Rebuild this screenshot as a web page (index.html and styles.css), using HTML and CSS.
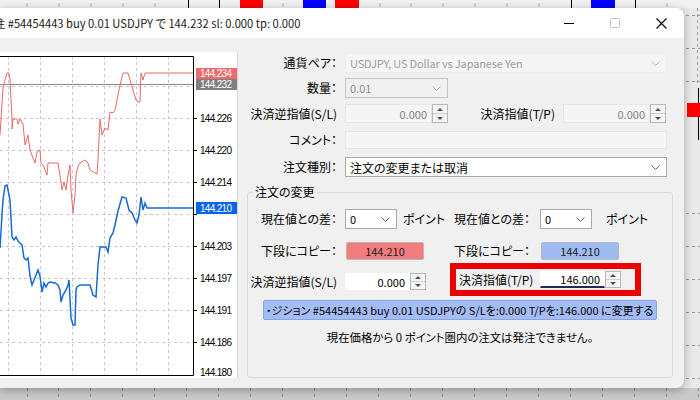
FILE: index.html
```html
<!DOCTYPE html>
<html lang="ja">
<head>
    <meta charset="UTF-8">
    <meta name="viewport" content="width=device-width, initial-scale=1.0">
    <title>注文の変更</title>
    <link rel="stylesheet" href="styles.css">
</head>
<body>
<div class="desktop">
    <!-- chart behind the dialog -->
    <svg class="backdrop" width="700" height="400" viewBox="0 0 700 400">
        <rect width="700" height="400" fill="#e9e9e9"/>
        <rect width="700" height="8" fill="#f2f2f2"/>
        <rect y="388" width="700" height="12" fill="#c9c9c9"/>
        <g stroke="#b4b4b4">
            <line x1="27" y1="3" x2="27" y2="7"/><line x1="59" y1="3" x2="59" y2="7"/>
            <line x1="91" y1="3" x2="91" y2="7"/><line x1="123" y1="3" x2="123" y2="7"/>
            <line x1="155" y1="3" x2="155" y2="7"/><line x1="283" y1="3" x2="283" y2="7"/>
            <line x1="380" y1="3" x2="380" y2="7"/><line x1="411" y1="3" x2="411" y2="7"/>
            <line x1="443" y1="3" x2="443" y2="7"/><line x1="475" y1="3" x2="475" y2="7"/>
            <line x1="507" y1="3" x2="507" y2="7"/><line x1="539" y1="3" x2="539" y2="7"/>
            <line x1="667" y1="3" x2="667" y2="7"/>
        </g>
        <g stroke="#000">
            <line x1="188.5" y1="0" x2="188.5" y2="8"/><line x1="219.5" y1="0" x2="219.5" y2="8"/>
            <line x1="571.5" y1="0" x2="571.5" y2="8"/><line x1="635.5" y1="0" x2="635.5" y2="8"/>
            <line x1="698.5" y1="88" x2="698.5" y2="140"/>
        </g>
        <rect x="240" width="23" height="8" fill="#f00"/>
        <rect x="303" width="23" height="8" fill="#00f"/>
        <rect x="335" width="24" height="8" fill="#f00"/>
        <rect x="591" width="24" height="8" fill="#00f"/>
        <rect x="687" y="103" width="13" height="14" fill="#f00"/>
        <g stroke="#9a9a9a" stroke-dasharray="3 3">
            <line x1="697.5" y1="8" x2="697.5" y2="86"/>
            <line x1="686" y1="15.5" x2="700" y2="15.5"/><line x1="686" y1="48.5" x2="700" y2="48.5"/>
            <line x1="686" y1="81.5" x2="700" y2="81.5"/><line x1="686" y1="213.5" x2="700" y2="213.5"/>
            <line x1="686" y1="246.5" x2="700" y2="246.5"/><line x1="686" y1="279.5" x2="700" y2="279.5"/>
            <line x1="686" y1="312.5" x2="700" y2="312.5"/><line x1="686" y1="345.5" x2="700" y2="345.5"/>
            <line x1="686" y1="378.5" x2="700" y2="378.5"/>
        </g>
        <g stroke="#8c8c8c" stroke-dasharray="3 3">
            <line x1="27.5" y1="388" x2="27.5" y2="400"/><line x1="58.5" y1="388" x2="58.5" y2="400"/>
            <line x1="90.5" y1="388" x2="90.5" y2="400"/><line x1="122.5" y1="388" x2="122.5" y2="400"/>
            <line x1="154.5" y1="388" x2="154.5" y2="400"/><line x1="186.5" y1="388" x2="186.5" y2="400"/>
            <line x1="218.5" y1="388" x2="218.5" y2="400"/><line x1="250.5" y1="388" x2="250.5" y2="400"/>
            <line x1="282.5" y1="388" x2="282.5" y2="400"/><line x1="314.5" y1="388" x2="314.5" y2="400"/>
            <line x1="346.5" y1="388" x2="346.5" y2="400"/><line x1="378.5" y1="388" x2="378.5" y2="400"/>
            <line x1="410.5" y1="388" x2="410.5" y2="400"/><line x1="442.5" y1="388" x2="442.5" y2="400"/>
            <line x1="474.5" y1="388" x2="474.5" y2="400"/><line x1="506.5" y1="388" x2="506.5" y2="400"/>
            <line x1="538.5" y1="388" x2="538.5" y2="400"/><line x1="570.5" y1="388" x2="570.5" y2="400"/>
            <line x1="602.5" y1="388" x2="602.5" y2="400"/><line x1="634.5" y1="388" x2="634.5" y2="400"/>
            <line x1="666.5" y1="388" x2="666.5" y2="400"/><line x1="698.5" y1="388" x2="698.5" y2="400"/>
        </g>
    </svg>

    <div class="dialog">
        <div class="titlebar">
            <span class="title">注 #54454443 buy 0.01 USDJPY で 144.232 sl: 0.000 tp: 0.000</span>
            <div class="win-buttons">
                <span class="win-btn"><svg width="10" height="1"><line x1="0" y1="0.5" x2="10" y2="0.5" stroke="#000"/></svg></span>
                <span class="win-btn"><svg width="10" height="10"><rect x="0.5" y="0.5" width="9" height="9" rx="1" fill="none" stroke="#c2c2c2"/></svg></span>
                <span class="win-btn"><svg width="11" height="11"><path d="M0.5 0.5 L10.5 10.5 M10.5 0.5 L0.5 10.5" stroke="#000" stroke-width="1.1"/></svg></span>
            </div>
        </div>

        <div class="dialog-body">
            <!-- Tick chart -->
            <div class="chart-panel">
                <svg width="237" height="326" viewBox="0 52 237 326">
                    <g stroke="#c6c6c6" stroke-dasharray="3 3">
                        <line x1="8.5" y1="56" x2="8.5" y2="375"/><line x1="40.5" y1="56" x2="40.5" y2="375"/>
                        <line x1="72.5" y1="56" x2="72.5" y2="375"/><line x1="104.5" y1="56" x2="104.5" y2="375"/>
                        <line x1="136.5" y1="56" x2="136.5" y2="375"/><line x1="168.5" y1="56" x2="168.5" y2="375"/>
                        <line x1="0" y1="86.5" x2="193" y2="86.5"/><line x1="0" y1="118.5" x2="193" y2="118.5"/>
                        <line x1="0" y1="150.5" x2="193" y2="150.5"/><line x1="0" y1="182.5" x2="193" y2="182.5"/>
                        <line x1="0" y1="214.5" x2="193" y2="214.5"/><line x1="0" y1="246.5" x2="193" y2="246.5"/>
                        <line x1="0" y1="278.5" x2="193" y2="278.5"/><line x1="0" y1="310.5" x2="193" y2="310.5"/>
                        <line x1="0" y1="342.5" x2="193" y2="342.5"/>
                    </g>
                    <line x1="0" y1="84.5" x2="193" y2="84.5" stroke="#8a8a8a"/>
                    <path class="ask" d="M0,135 L3,88 L5,80 L7,73 L9,73 L10,80 L12,119 L12,129 L13,119 L17,119 L18,124 L20,119 L23,124 L25,145 L28,135 L30,150 L33,158 L35,163 L37,152 L40,150 L41,163 L43,165 L45,170 L47,175 L48,163 L58,163 L60,175 L62,190 L64,182 L66,190 L68,175 L70,165 L71,190 L73,213 L75,195 L76,175 L78,166 L80,163 L85,160 L88,163 L90,170 L97,174 L98,160 L100,119 L102,135 L105,128 L108,130 L110,112 L113,113 L115,110 L117,100 L120,85 L123,73 L128,73 L130,80 L133,90 L136,100 L138,102 L140,102 L141,73 L143,80 L145,73 L147,73 L193,73"/>
                    <path class="bid" d="M0,248 L2,215 L3,200 L5,186 L7,185 L8,190 L10,200 L12,237 L14,240 L16,237 L18,241 L20,243 L22,245 L24,258 L26,260 L28,258 L30,276 L32,285 L34,280 L36,275 L38,270 L40,276 L42,292 L44,283 L46,287 L48,283 L50,282 L55,283 L58,285 L60,290 L61,302 L63,295 L66,290 L68,285 L69,280 L71,318 L73,325 L75,325 L76,290 L77,287 L80,285 L90,285 L93,295 L96,297 L98,265 L100,247 L106,247 L108,252 L110,238 L113,233 L115,225 L118,211 L122,197 L126,198 L129,210 L132,213 L135,220 L137,223 L139,215 L141,197 L143,210 L145,203 L147,208 L193,208"/>
                    <path d="M-1 56.5 H193.5 V375.5 H-1" fill="none" stroke="#000"/>
                    <g stroke="#000">
                        <line x1="193" y1="118.5" x2="197" y2="118.5"/><line x1="193" y1="150.5" x2="197" y2="150.5"/>
                        <line x1="193" y1="182.5" x2="197" y2="182.5"/><line x1="193" y1="214.5" x2="197" y2="214.5"/>
                        <line x1="193" y1="246.5" x2="197" y2="246.5"/><line x1="193" y1="278.5" x2="197" y2="278.5"/>
                        <line x1="193" y1="310.5" x2="197" y2="310.5"/><line x1="193" y1="342.5" x2="197" y2="342.5"/>
                    </g>
                    <g class="axis">
                        <text x="200" y="122" textLength="32">144.226</text>
                        <text x="200" y="154" textLength="32">144.220</text>
                        <text x="200" y="186" textLength="32">144.214</text>
                        <text x="200" y="250" textLength="32">144.203</text>
                        <text x="200" y="282" textLength="32">144.197</text>
                        <text x="200" y="314" textLength="32">144.191</text>
                        <text x="200" y="346" textLength="32">144.186</text>
                        <text x="200" y="376" textLength="32">144.180</text>
                    </g>
                    <rect x="196" y="68" width="41" height="11" fill="#ef6b6b"/>
                    <rect x="196" y="79" width="41" height="11" fill="#7f7f7f"/>
                    <rect x="196" y="202" width="41" height="12" fill="#0b63e5"/>
                    <g class="axis badge">
                        <text x="200" y="77" textLength="32">144.234</text>
                        <text x="200" y="88" textLength="32">144.232</text>
                        <text x="200" y="212" textLength="32">144.210</text>
                    </g>
                </svg>
            </div>

            <!-- Order form -->
            <div class="order-form">
                <div class="row outer r-pair">
                    <span class="lbl">通貨ペア：</span>
                    <div class="field combo disabled flat grow">
                        <span class="val">USDJPY, US Dollar vs Japanese Yen</span>
                        <svg class="chev" width="9" height="5"><polyline points="0.5,0.5 4.5,4.5 8.5,0.5"/></svg>
                    </div>
                </div>
                <div class="row outer r-volume">
                    <span class="lbl">数量：</span>
                    <div class="field combo disabled w103">
                        <span class="val">0.01</span>
                        <svg class="chev" width="9" height="5"><polyline points="0.5,0.5 4.5,4.5 8.5,0.5"/></svg>
                    </div>
                </div>
                <div class="row outer r-stops">
                    <span class="lbl">決済逆指値(S/L)</span>
                    <div class="field spinbox disabled">
                        <span class="edit w87">0.000</span>
                        <span class="spin"><span class="up"></span><span class="down"></span></span>
                    </div>
                    <span class="lbl w107">決済指値(T/P)</span>
                    <div class="field spinbox disabled">
                        <span class="edit w87">0.000</span>
                        <span class="spin"><span class="up"></span><span class="down"></span></span>
                    </div>
                </div>
                <div class="row outer r-comment">
                    <span class="lbl">コメント：</span>
                    <div class="field textbox disabled grow"></div>
                </div>
                <div class="row outer r-type">
                    <span class="lbl">注文種別：</span>
                    <div class="field combo grow">
                        <span>注文の変更または取消</span>
                        <svg class="chev" width="9" height="5"><polyline points="0.5,0.5 4.5,4.5 8.5,0.5"/></svg>
                    </div>
                </div>

                <fieldset class="group">
                    <legend>注文の変更</legend>
                    <div class="row r-diff">
                        <span class="lbl">現在値との差：</span>
                        <div class="field combo w52">
                            <span class="val">0</span>
                            <svg class="chev" width="9" height="5"><polyline points="0.5,0.5 4.5,4.5 8.5,0.5"/></svg>
                        </div>
                        <span class="unit">ポイント</span>
                        <span class="lbl w90">現在値との差：</span>
                        <div class="field combo w52 gap10">
                            <span class="val">0</span>
                            <svg class="chev" width="9" height="5"><polyline points="0.5,0.5 4.5,4.5 8.5,0.5"/></svg>
                        </div>
                        <span class="unit gap14">ポイント</span>
                    </div>
                    <div class="row r-copy">
                        <span class="lbl">下段にコピー：</span>
                        <button class="copy-btn sell">144.210</button>
                        <span class="lbl w106">下段にコピー：</span>
                        <button class="copy-btn buy">144.210</button>
                    </div>
                    <div class="row r-levels">
                        <div class="level">
                            <span class="lbl">決済逆指値(S/L)</span>
                            <div class="field spinbox">
                                <span class="edit w65">0.000</span>
                                <span class="spin"><span class="up"></span><span class="down"></span></span>
                            </div>
                        </div>
                        <div class="level highlight">
                            <span class="lbl w72">決済指値(T/P)</span>
                            <div class="field spinbox">
                                <span class="edit w65 focused">146.000</span>
                                <span class="spin"><span class="up"></span><span class="down"></span></span>
                            </div>
                        </div>
                    </div>
                    <div class="summary">・ジション #54454443 buy 0.01 USDJPYの S/Lを:0.000 T/Pを:146.000 に変更する</div>
                    <p class="note">現在価格から 0 ポイント圏内の注文は発注できません。</p>
                </fieldset>
            </div>
        </div>
    </div>
</div>
</body>
</html>
```

FILE: styles.css
```css
* {
    margin: 0;
    padding: 0;
    box-sizing: border-box;
}

body {
    width: 700px;
    height: 400px;
    overflow: hidden;
    font-family: "Noto Sans CJK JP", "Noto Sans", sans-serif;
    font-size: 12px;
    font-feature-settings: "palt";
    color: #000;
}

/* Desktop with the chart behind */
.desktop {
    position: relative;
    width: 700px;
    height: 400px;
    overflow: hidden;
}

.backdrop {
    position: absolute;
    left: 0;
    top: 0;
}

/* Dialog window */
.dialog {
    position: relative;
    margin-top: 8px;
    width: 684px;
    height: 380px;
    background: #f0f0f0;
    border-radius: 0 8px 8px 0;
    box-shadow: 0 2px 10px rgba(0, 0, 0, 0.3);
    overflow: hidden;
    display: flex;
    flex-direction: column;
}

.titlebar {
    height: 30px;
    background: #fff;
    display: flex;
    align-items: center;
}

.title {
    flex: 1;
    margin-left: -6px;
    white-space: nowrap;
    font-size: 11.2px;
    line-height: 16px;
    color: #1a1a1a;
}

.win-buttons {
    display: flex;
    height: 100%;
}

.win-btn {
    width: 46px;
    display: flex;
    align-items: center;
    justify-content: center;
}

.win-btn svg {
    display: block;
}

.dialog-body {
    flex: 1;
    display: flex;
}

/* Chart */
.chart-panel {
    margin-top: 14px;
    width: 238px;
    height: 326px;
    background: #fff;
    border-right: 1px solid #d4d4d4;
}

.chart-panel svg {
    display: block;
}

.ask {
    fill: none;
    stroke: #e56a6a;
    stroke-width: 1;
}

.bid {
    fill: none;
    stroke: #1868d6;
    stroke-width: 1.5;
}

.axis text {
    font-family: "Liberation Sans", Arial, sans-serif;
    font-size: 10px;
    fill: #000;
}

.axis.badge text {
    fill: #fff;
}

/* Form */
.order-form {
    flex: 1;
    padding: 15px 11px 0 0;
}

.row {
    display: flex;
    align-items: center;
    height: 20px;
}

.row.outer {
    padding-right: 6px;
}

.r-volume { margin-top: 5px; }
.r-stops { margin-top: 6px; height: 19px; }
.r-comment { margin-top: 8px; height: 18px; }
.r-type { margin-top: 8px; }

.lbl {
    width: 99px;
    flex: none;
    text-align: right;
    white-space: nowrap;
    line-height: 14px;
}

.group .lbl { width: 89px; }
.lbl.w107 { width: 107px; }
.group .lbl.w90 { width: 90px; }
.group .lbl.w106 { width: 106px; }
.group .lbl.w72 { width: 72px; text-align: left; }

.field {
    height: 100%;
    margin-left: 8px;
    display: flex;
    align-items: center;
    flex: none;
}

.grow { flex: 1; }
.w103 { width: 103px; }
.w52 { width: 52px; }
.w87 { width: 87px; }
.w65 { width: 65px; }
.gap10 { margin-left: 10px; }

.val,
.edit {
    font-size: 11px;
}

.combo {
    background: #fff;
    border: 1px solid #a9a9a9;
    padding: 0 6px 0 4px;
    justify-content: space-between;
    white-space: nowrap;
}

.combo.disabled {
    background: #f0f0f0;
    border-color: #c4c4c4;
    color: #8a8a8a;
}

.combo.flat {
    background: #f5f5f5;
    border-color: #ececec;
    color: #9c9c9c;
}

.combo.flat .val {
    letter-spacing: -0.15px;
}

.chev polyline {
    fill: none;
    stroke: #606060;
    stroke-width: 1;
}

.disabled .chev polyline {
    stroke: #b4b4b4;
}

.textbox {
    border: 1px solid #e6e6e6;
    background: #f5f5f5;
}

.edit {
    height: 100%;
    display: flex;
    align-items: center;
    justify-content: flex-end;
    padding-right: 4px;
    background: #fff;
    border: 1px solid #fff;
}

.disabled .edit {
    background: #f5f5f5;
    border-color: #e6e6e6;
    color: #808080;
}

.edit.focused {
    border-bottom: 2px solid #1f2a5a;
}

.spin {
    width: 16px;
    height: 100%;
    display: flex;
    flex-direction: column;
    border: 1px solid #b8b8b8;
    background: #f4f4f4;
}

.spin span {
    flex: 1;
    display: flex;
    align-items: center;
    justify-content: center;
}

.spin .up {
    border-bottom: 1px solid #cfcfcf;
}

.spin .up::before {
    content: "";
    border-left: 3px solid transparent;
    border-right: 3px solid transparent;
    border-bottom: 3px solid #505050;
}

.spin .down::before {
    content: "";
    border-left: 3px solid transparent;
    border-right: 3px solid transparent;
    border-top: 3px solid #505050;
}

/* Modify group */
.group {
    margin: 8px 0 0 9px;
    height: 193px;
    border: 1px solid #dadada;
    border-radius: 3px;
}

.group legend {
    margin-left: 5px;
    padding: 0 2px;
    line-height: 14px;
}

.r-diff { margin-top: 10px; }

.unit {
    margin-left: 6px;
    width: 37px;
    flex: none;
    white-space: nowrap;
    line-height: 14px;
}

.unit.gap14 { margin-left: 14px; }

.r-copy {
    margin-top: 13px;
    height: 18px;
}

.copy-btn {
    width: 78px;
    height: 18px;
    margin-left: 9px;
    flex: none;
    border: 1px solid #b9b9b9;
    border-radius: 2px;
    font-family: inherit;
    font-size: 11px;
    color: #202020;
}

.copy-btn.sell { background: #f47c7c; }
.copy-btn.buy { background: #a0baf3; margin-left: 11px; }

.r-levels {
    margin-top: 3px;
    height: 33px;
    align-items: stretch;
}

.level {
    display: flex;
    align-items: center;
}

.level:first-child {
    align-self: flex-end;
    height: 17px;
    margin-bottom: 6px;
}

.level .field {
    height: 17px;
}

.highlight {
    margin-left: 24px;
    border: 6px solid #ee0000;
    padding: 0 14px 0 3px;
}

.highlight .field {
    margin-left: 9px;
}

.summary {
    margin: 4px 0 0 15px;
    width: 394px;
    height: 20px;
    padding-left: 2px;
    font-size: 11px;
    line-height: 18px;
    background: #a5bdf5;
    border: 1px solid #87a3e4;
    border-radius: 2px;
    white-space: nowrap;
    overflow: hidden;
}

.note {
    margin-top: 10px;
    text-align: center;
    font-size: 11.4px;
    line-height: 14px;
}
```
